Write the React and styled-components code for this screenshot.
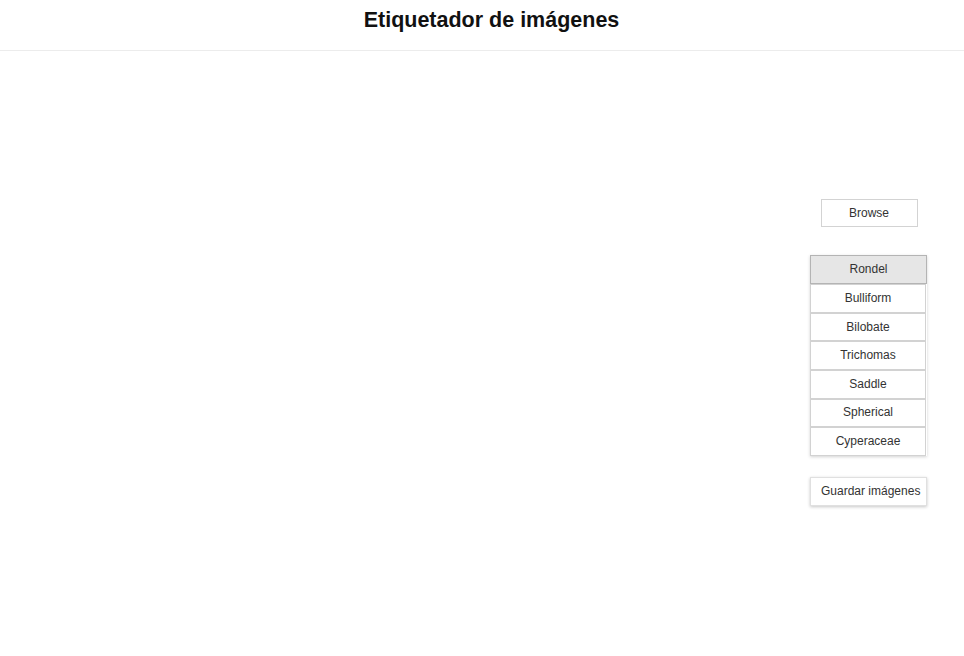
import React, { useState } from "react";
import styled, { createGlobalStyle } from "styled-components";

const Global = createGlobalStyle`
  html, body { margin: 0; padding: 0; background: #fff; }
  body { font-family: "Liberation Sans", Arial, sans-serif; }
`;

const Page = styled.div`
  display: flex;
  flex-direction: column;
  height: 656px;
`;

const Header = styled.header`
  height: 51px;
  box-sizing: border-box;
  padding-bottom: 9px;
  border-bottom: 1px solid #ececec;
  display: flex;
  align-items: center;
  justify-content: center;
`;

const Title = styled.h1`
  margin: 0;
  font-size: 21.5px;
  font-weight: bold;
  color: #111;
  padding-left: 19px;
`;

const Main = styled.main`
  flex: 1;
  display: flex;
`;

const Canvas = styled.div`
  flex: 1;
`;

const Sidebar = styled.aside`
  width: 154px;
  padding-right: 37px;
  padding-bottom: 2px;
  display: flex;
  flex-direction: column;
  align-items: flex-end;
  justify-content: center;
`;

const Column = styled.div`
  width: 117px;
  display: flex;
  flex-direction: column;
  align-items: center;
`;

const BrowseButton = styled.button`
  width: 97px;
  height: 28px;
  margin-left: 1px;
  border: 1px solid #d3d3d3;
  background: #fff;
  font-family: inherit;
  font-size: 12px;
  color: #333;
  cursor: pointer;
`;

const List = styled.div`
  margin-top: 28px;
  width: 117px;
  display: flex;
  flex-direction: column;
  box-shadow: 0 1px 3px rgba(0, 0, 0, 0.18);
`;

const Item = styled.button`
  height: ${(p) => (p.$active ? "29px" : "28.6px")};
  width: ${(p) => (p.$active ? "117px" : "116px")};
  border: 1px solid ${(p) => (p.$active ? "#b4b4b4" : "#d2d2d2")};
  background: ${(p) => (p.$active ? "#e6e6e6" : "#fff")};
  font-family: inherit;
  font-size: 12px;
  color: #333;
  padding: 0 0 1px;
  cursor: pointer;
`;

const SaveButton = styled.button`
  margin-top: 21px;
  width: 117px;
  height: 29px;
  border: 1px solid #e0e0e0;
  background: #fff;
  box-shadow: 0 1px 3px rgba(0, 0, 0, 0.22);
  font-family: inherit;
  font-size: 12px;
  color: #333;
  text-align: left;
  padding: 0 0 1px 10px;
  white-space: nowrap;
  cursor: pointer;
`;

const labels = ["Rondel", "Bulliform", "Bilobate", "Trichomas", "Saddle", "Spherical", "Cyperaceae"];

export default function App() {
  const [active, setActive] = useState("Rondel");
  return (
    <Page>
      <Global />
      <Header>
        <Title>Etiquetador de imágenes</Title>
      </Header>
      <Main>
        <Canvas />
        <Sidebar>
          <Column>
            <BrowseButton>Browse</BrowseButton>
            <List>
              {labels.map((l) => (
                <Item key={l} $active={l === active} onClick={() => setActive(l)}>
                  {l}
                </Item>
              ))}
            </List>
            <SaveButton>Guardar imágenes</SaveButton>
          </Column>
        </Sidebar>
      </Main>
    </Page>
  );
}
